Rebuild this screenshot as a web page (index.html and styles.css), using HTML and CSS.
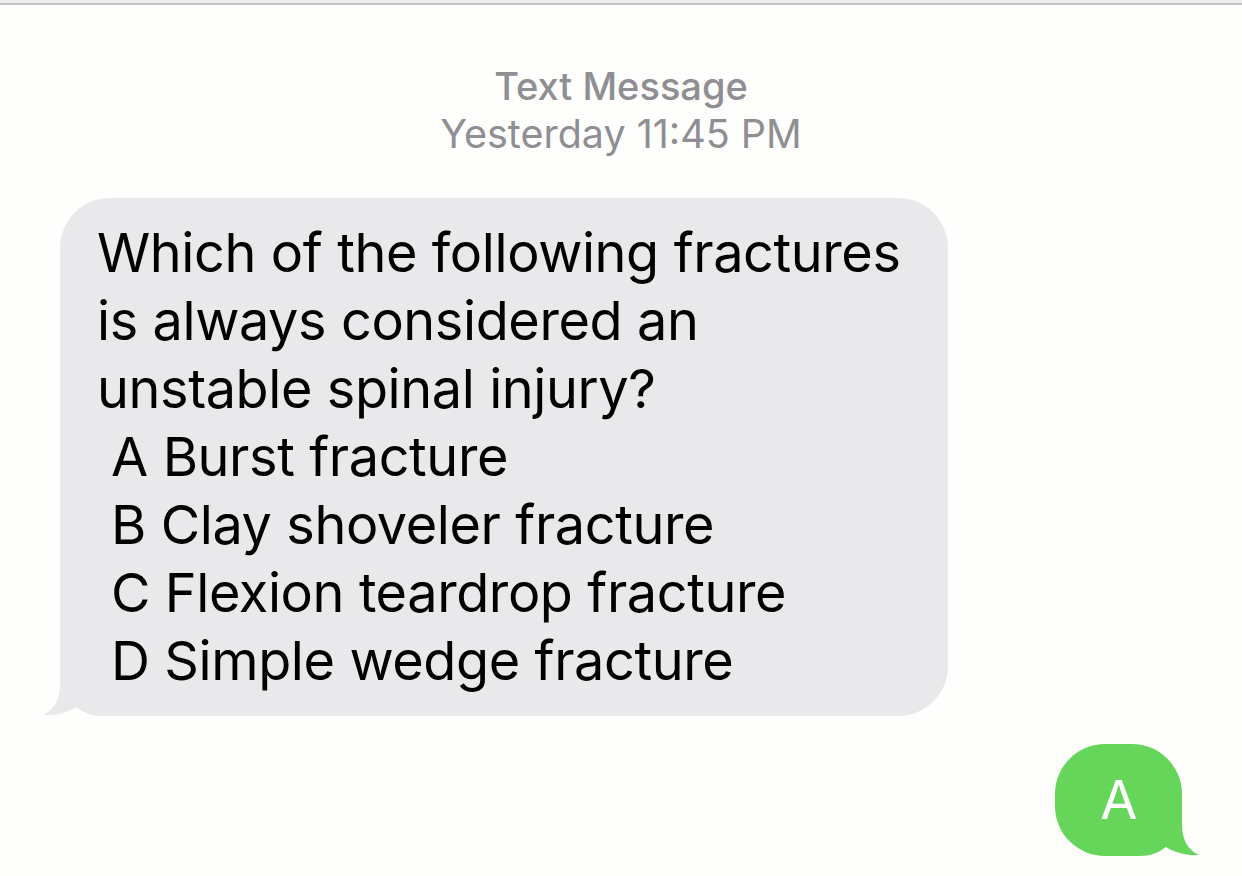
FILE: index.html
```html
<!DOCTYPE html>
<html lang="en">
<head>
<meta charset="utf-8">
<title>Text Message</title>
<link rel="stylesheet" href="styles.css">
</head>
<body>
<div class="topbar"></div>
<main class="thread">
  <header class="stamp">
    <div class="stamp-kind">Text Message</div>
    <div class="stamp-time">Yesterday 11:45 PM</div>
  </header>
  <div class="row row-in">
    <div class="bubble bubble-in">
      <svg class="tail tail-in" width="70" height="50" viewBox="0 0 70 50" aria-hidden="true"><path d="M18,0 L18,18 C18,34 12,44 1,49 C14,50 26,46 34,41 C42,47 50,50 60,50 L70,50 L70,0 Z" fill="#e9e9eb"/></svg>
      <div class="line">Which of the following fractures</div>
      <div class="line">is always considered an</div>
      <div class="line">unstable spinal injury?</div>
      <div class="line opt">A Burst fracture</div>
      <div class="line opt">B Clay shoveler fracture</div>
      <div class="line opt">C Flexion teardrop fracture</div>
      <div class="line opt">D Simple wedge fracture</div>
    </div>
  </div>
  <div class="row row-out">
    <div class="bubble bubble-out">
      <svg class="tail tail-out" width="70" height="50" viewBox="0 0 70 50" aria-hidden="true"><path d="M18,0 L18,18 C18,34 12,44 1,49 C14,50 26,46 34,41 C42,47 50,50 60,50 L70,50 L70,0 Z" fill="#66d65a"/></svg>
      <div class="line">A</div>
    </div>
  </div>
</main>
</body>
</html>
```
FILE: styles.css
```css
html, body {
  margin: 0;
  padding: 0;
  background: #fefefd;
}
body {
  font-family: Inter, "Liberation Sans", sans-serif;
  width: 1242px;
  height: 876px;
  overflow: hidden;
}
.topbar {
  height: 3px;
  background: #efefef;
  border-bottom: 2px solid #c4c4c4;
}
.thread {
  display: flex;
  flex-direction: column;
}
.stamp {
  margin-top: 57px;
  text-align: center;
  color: #8e8e93;
  font-size: 38px;
  line-height: 48px;
}
.stamp-kind {
  font-weight: 500;
}
.stamp-time {
  font-weight: 400;
  font-size: 39.5px;
}
.row {
  display: flex;
}
.row-in {
  margin-top: 40px;
  padding-left: 60px;
}
.row-out {
  margin-top: 28px;
  padding-right: 60px;
  justify-content: flex-end;
}
.bubble {
  position: relative;
  border-radius: 50px;
  font-size: 54px;
  line-height: 68px;
  letter-spacing: -0.4px;
  white-space: nowrap;
}
.bubble-in {
  background: #e9e9eb;
  color: #000;
  width: 888px;
  box-sizing: border-box;
  padding: 21px 40px 21px 37px;
}
.bubble-out {
  background: #66d65a;
  color: #fff;
  padding: 22px 45px;
}
.line {
  position: relative;
  z-index: 1;
}
.opt {
  padding-left: 14px;
}
.tail {
  position: absolute;
  bottom: 0;
  display: block;
  z-index: 0;
}
.tail-in {
  left: -18px;
}
.tail-out {
  right: -18px;
  transform: scaleX(-1);
}
```
